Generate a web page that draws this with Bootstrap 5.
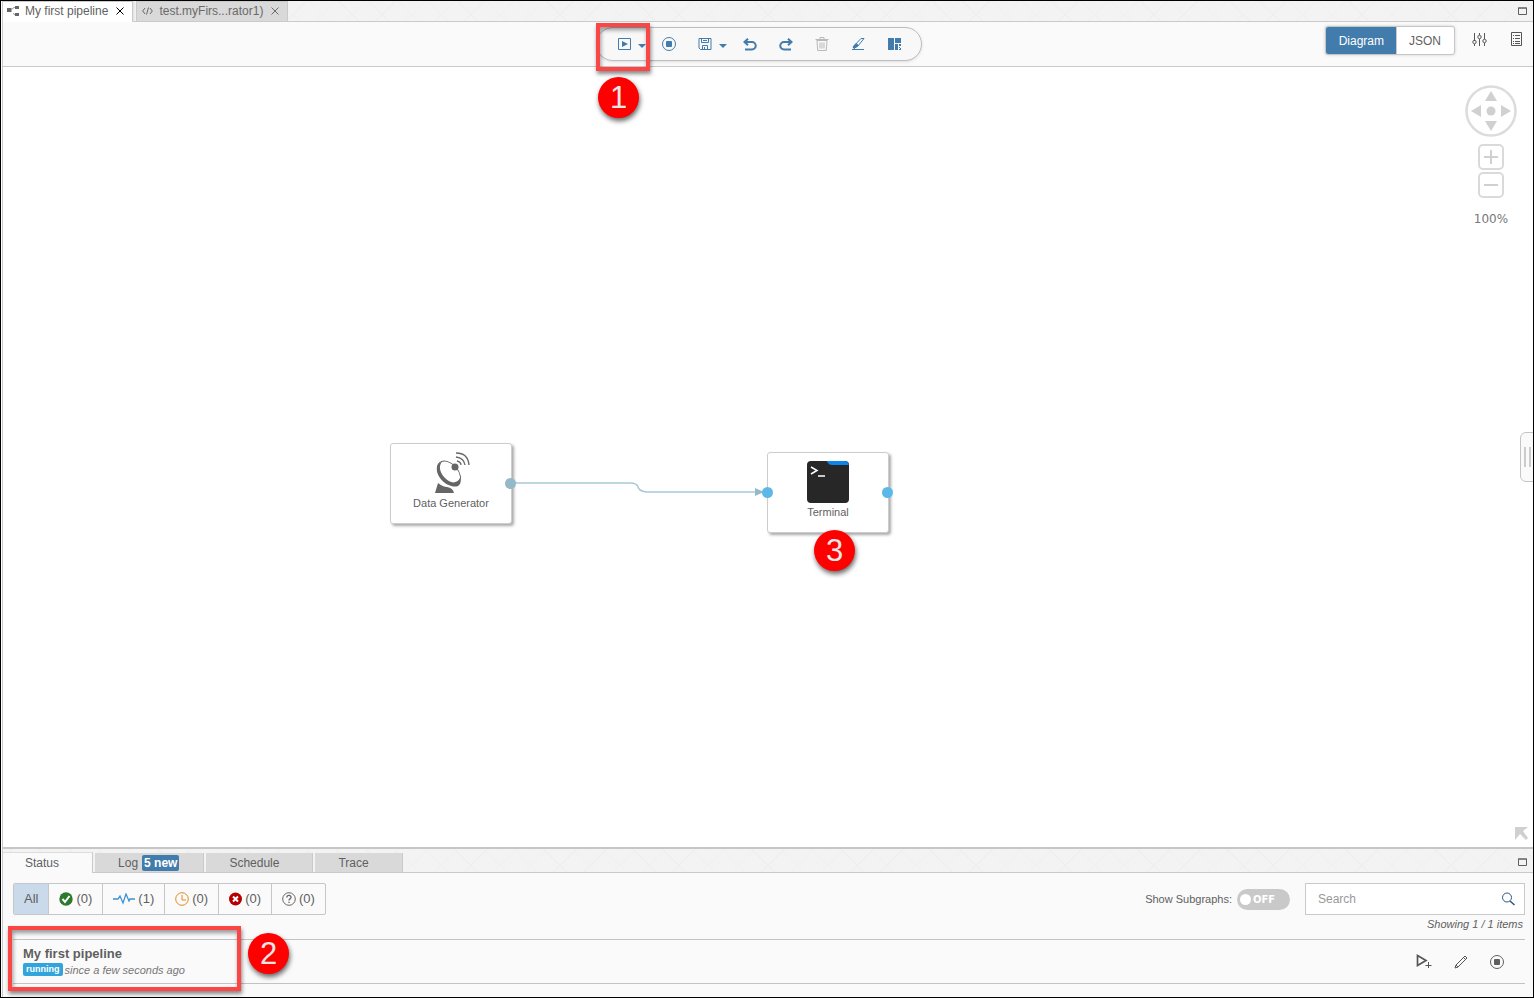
<!DOCTYPE html>
<html lang="en">
<head>
<meta charset="utf-8">
<meta name="viewport" content="width=device-width, initial-scale=1">
<title>My first pipeline</title>
<link href="https://cdn.jsdelivr.net/npm/bootstrap@5.3.0/dist/css/bootstrap.min.css" rel="stylesheet">
<style>
  :root { --line: #cacaca; --ink: #5f5f5f; --blue: #427cac; }
  body { font: 12px/16px "Liberation Sans", Arial, sans-serif; color: var(--ink); background: #fff; border: 1px solid #000; padding-left: 1px; }
  svg { display: block; }
  a { color: inherit; text-decoration: none; }
  button { border: 0; background: none; padding: 0; color: inherit; }
  .workspace { border-left: 1px solid var(--line); }
  .tabstrip { padding-right: 6px; border-bottom: 1px solid var(--line); background-color: #f3f3f3;
    background-image: repeating-linear-gradient(45deg, transparent 0 20px, #efefef 20px 21px), repeating-linear-gradient(-45deg, transparent 0 20px, #efefef 20px 21px); }
  .doc-tab { height: 20px; padding: 0 8px 2px 5px; margin-left: 3px; border: 1px solid var(--line); border-bottom: 0; background: #d9d9d9; color: #6a6a6a; }
  .doc-tab.current { background: #fff; border-left: 0; color: var(--ink); height: 21px; padding: 0 8px 2px 4px; margin: 0 0 -1px; box-shadow: 1px 0 2px #ddd; }
  .doc-tab a { margin: 0 8px 0 6px; }
  .editor-bar { display: grid; grid-template-columns: 1fr auto 1fr; height: 45px; padding-right: 10px; background: #fafafa; border-bottom: 1px solid var(--line); }
  .tool-pill { grid-column: 2; height: 34px; padding: 0 9px; border: 1px solid #bdbdbd; border-radius: 17px; background: #f8f8f8; color: var(--blue); box-shadow: 0 1px 3px #ddd; }
  .tool { width: 36px; height: 32px; display: flex; align-items: center; justify-content: center; }
  .tool.split { width: 29px; padding-left: 11px; justify-content: flex-start; }
  .drop { width: 14px; height: 32px; margin-right: 2px; display: flex; align-items: center; justify-content: center; padding-top: 3px; }
  .view-switch { height: 29px; margin-right: 17px; border: 1px solid #c6c6c6; border-radius: 3px; overflow: hidden; background: #fff; box-shadow: 0 0 3px #ccc; }
  .view-switch button { height: 27px; padding: 0 13px 0 12px; }
  .view-switch .on { background: var(--blue); color: #fff; padding: 0 12px 0 13px; border-right: 1px solid var(--line); }
  .side-tool { margin-top: 10px; }
  .canvas { min-height: 600px; overflow: hidden; }
  .wires { left: 0; top: 0; }
  .node { width: 122px; height: 81px; background: #fff; border: 1px solid #cdcdcd; border-radius: 3px; box-shadow: 2px 2px 3px #aaa; font-size: 11px; line-height: 18px; }
  .port { width: 11px; height: 11px; border-radius: 50%; background: #5cb8e6; top: 34px; }
  .port.in { left: -6px; } .port.out { right: -5px; } .port.used { background: #94b9c8; }
  .navigator { right: 16px; top: 18px; }
  .zoom-set { margin-top: 7px; gap: 2px; }
  .zoom-label { margin-top: 13px; font: 12px/16px "DejaVu Sans", Verdana, sans-serif; color: #777; }
  .drawer { right: -1px; top: 50%; transform: translateY(-50%); width: 14px; height: 50px; gap: 3px; padding-left: 3px; border: 1px solid #c4c4c4; border-radius: 6px 0 0 6px; background: #fafafa; }
  .drawer i { width: 2px; height: 20px; background: #ccc; }
  .expand { right: 5px; bottom: 7px; }
  .lower { border-top: 2px solid #c6c6c6; }
  .info-tabs { gap: 2px; padding-top: 3px; }
  .info-tab { height: 19px; padding: 0 24px 0 23px; border-right: 1px solid var(--line); background: #d9d9d9; }
  .info-tab.wide { padding-right: 33px; }
  .info-tab.current { height: 21px; margin-bottom: -1px; background: #fafafa; padding: 0 33px 0 22px; border-top: 1px solid #ddd; }
  .fresh { background: var(--blue); color: #fff; font-weight: bold; padding: 0 2px; border-radius: 2px; }
  .status-pane { background: #fafafa; padding: 10px 8px 13px 10px; }
  .filters { height: 32px; border: 1px solid #c6c6c6; border-radius: 2px; overflow: hidden; font-size: 13px; }
  .filters button { height: 30px; padding: 0 10px; display: flex; align-items: center; gap: 3px; border-left: 1px solid #c6c6c6; }
  .filters button:first-child { border-left: 0; background: #cadaea; }
  .small-type { font-size: 11px; line-height: 14px; }
  .tally { padding: 2px 2px 8px; }
  .switch { width: 53px; height: 21px; margin: 0 15px 0 5px; border-radius: 11px; background: #c9c9c9; color: #fff; font: bold 10px/21px "DejaVu Sans", Verdana, sans-serif; padding-left: 16px; cursor: pointer; }
  .switch input { appearance: none; position: absolute; left: 3px; top: 5px; width: 11px; height: 11px; margin: 0; border-radius: 50%; background: #fff; }
  .search-box { width: 220px; height: 32px; border: 1px solid var(--line); background: #fff; }
  .search-box input { border: 0; outline: 0; width: 100%; padding: 0 0 0 12px; font-size: 12px; background: none; }
  .search-box input::placeholder { color: #999; opacity: 1; }
  .run-row { height: 45px; border: 1px solid #c2c2c2; border-width: 1px 0; padding: 0 0 2px 10px; }
  .run-name { font-size: 13px; font-weight: bold; line-height: 18px; }
  .run-actions { gap: 22px; margin-right: 21px; padding-top: 2px; }
  .since { color: #777; }
  .state { background: #31a5db; color: #fff; font: bold 9px/13px "Liberation Sans", Arial, sans-serif; padding: 0 3px; margin-right: 2px; border-radius: 2px; }
  .frame { border: 4px solid #fc4545; box-shadow: 1px 3px 4px #0007, inset 1px 3px 4px #0006; pointer-events: none; }
  .frame.run { left: -1px; top: -5px; width: 54px; height: 48px; }
  .frame.job { left: -5px; top: -14px; width: 233px; height: 65px; }
  .step { width: 41px; height: 41px; border-radius: 50%; background: #fe0000; color: #e6e6e6; font-size: 31px; line-height: 41px; text-align: center; box-shadow: 1px 3px 5px #0009; }
</style>
</head>
<body class="d-flex flex-column min-vh-100">
<svg class="d-none">
  <symbol id="caret" viewBox="0 0 8 4"><path d="M0 0h8L4 4z" fill="currentColor"/></symbol>
  <symbol id="cross" viewBox="0 0 8 8"><path d="M.5.5l7 7M7.5.5l-7 7" stroke="currentColor" fill="none"/></symbol>
  <symbol id="window" viewBox="0 0 9 8"><path d="M.5 1h8v6.5h-8zM0 1h9" stroke="currentColor" fill="none"/></symbol>
  <symbol id="stop" viewBox="0 0 14 14"><circle cx="7" cy="7" r="6.5" fill="none" stroke="currentColor"/><rect x="4" y="4" width="6" height="6" rx="1" fill="currentColor"/></symbol>
</svg>
<div class="workspace d-flex flex-column flex-grow-1" id="app">
  <nav class="tabstrip d-flex align-items-end" aria-label="Open documents">
    <div class="doc-tab current d-flex align-items-center">
      <svg width="12" height="12" viewBox="0 0 12 12" fill="#666"><path d="M0 3h4.500v4H0zM8 1h4v3H8zM8 8h4v3H8z"/><path d="M4.500 4.500L7 2.500h1M6.500 8l.5 1.500h1" fill="none" stroke="#999"/></svg>
      <a href="#">My first pipeline</a>
      <button aria-label="Close" class="text-black"><svg width="8" height="8"><use href="#cross"/></svg></button>
    </div>
    <div class="doc-tab d-flex align-items-center">
      <svg width="11" height="8" viewBox="0 0 11 8" fill="none" stroke="#666"><path d="M3 1L.7 4 3 7M8 1l2.300 3L8 7M6.500.5l-2 7"/></svg>
      <a href="#">test.myFirs...rator1)</a>
      <button aria-label="Close"><svg width="8" height="8"><use href="#cross"/></svg></button>
    </div>
    <button class="ms-auto align-self-center" aria-label="Maximize"><svg width="9" height="8"><use href="#window"/></svg></button>
  </nav>

  <header class="editor-bar">
    <div class="tool-pill d-flex position-relative align-self-center me-2">
      <button class="tool split" aria-label="Run"><svg width="14" height="14" viewBox="0 0 14 14"><path d="M1.500 1.500h12v11h-12z" fill="none" stroke="currentColor"/><path d="M5 4v6l6-3z" fill="currentColor"/></svg></button>
      <button class="drop" aria-label="Run options"><svg width="8" height="4"><use href="#caret"/></svg></button>
      <button class="tool" aria-label="Stop"><svg width="14" height="14"><use href="#stop"/></svg></button>
      <button class="tool split" aria-label="Save"><svg width="14" height="14" viewBox="0 0 14 14" fill="none" stroke="currentColor"><path d="M1 1.500h12v11H2.500L1 11zM3.500 1.500v4h7v-4M4.500 12.500v-4h5v4M6.500 10v2.500M5 3.500h4"/></svg></button>
      <button class="drop" aria-label="Save options"><svg width="8" height="4"><use href="#caret"/></svg></button>
      <button class="tool" aria-label="Undo"><svg width="14" height="13" viewBox="0 0 14 13" fill="none" stroke="currentColor" stroke-width="2"><path d="M5 .7L1.500 4 5 7.300M1.500 4H9a3.700 3.700 0 0 1 0 7.500H2"/></svg></button>
      <button class="tool" aria-label="Redo"><svg width="14" height="13" viewBox="0 0 14 13" fill="none" stroke="currentColor" stroke-width="2"><path d="M9 .7L12.500 4 9 7.300M12.500 4H5a3.700 3.700 0 0 0 0 7.500h7"/></svg></button>
      <button class="tool" aria-label="Delete" disabled><svg width="14" height="14" viewBox="0 0 14 14" fill="none" stroke="#b9b9b9"><path d="M.5 2.500h13M5 2V.5h4V2M2 4l.7 9.500h8.600L12 4M5 5.500v6M7 5.500v6M9 5.500v6M1.500 3.500h11"/></svg></button>
      <button class="tool" aria-label="Clear"><svg width="14" height="14" viewBox="0 0 14 14" fill="none" stroke="currentColor"><path d="M10 1.500h3L7 9l-4 2-1-1z"/><path d="M2 10l3-3.500L7.500 8.500 3 11.500z" fill="currentColor"/><path d="M1 12.500h12"/></svg></button>
      <button class="tool" aria-label="Arrange"><svg width="13" height="12" viewBox="0 0 13 12" fill="currentColor"><path d="M0 0h6v12H0zM7 0h6v5H7zM7 6h3v6H7zM11 6h2v2h-2zM11 9h1v1h-1zM12 10h1v2h-2v-1h1z"/></svg></button>
      <span class="frame run position-absolute"></span>
    </div>
    <div class="d-flex justify-content-end align-items-start">
      <div class="view-switch d-flex mt-1"><button class="on">Diagram</button><button>JSON</button></div>
      <button class="side-tool me-4" aria-label="Settings"><svg width="15" height="16" viewBox="0 0 15 16" fill="none" stroke="#555"><path d="M2.500 1v8M2.500 12v2M7.500 1v2M7.500 7v7M12.500 1v6M12.500 11v3"/><circle cx="2.500" cy="10" r="1.700"/><circle cx="7.500" cy="5" r="1.700"/><circle cx="12.500" cy="9" r="1.700"/></svg></button>
      <button class="side-tool" aria-label="Properties"><svg width="12" height="15" viewBox="0 0 12 15" fill="none" stroke="#555"><path d="M.5.5h10v13H.5zM2 3.500h1M4 3.500h5M2 6.500h1M4 6.500h5M2 9.500h1M4 9.500h5M2 11.500h1M4 11.500h5"/></svg></button>
    </div>
  </header>

  <main class="canvas position-relative flex-grow-1">
    <svg class="wires position-absolute" width="900" height="600" fill="none"><path d="M508 416H627q7 0 8 4t8 5H754" stroke="#a9c9d6" stroke-width="1.500"/><path d="M752 421l9 4-9 4z" fill="#94b9c8"/></svg>
    <div class="node position-absolute d-flex flex-column align-items-center" style="left:387px;top:376px">
      <svg class="mt-2" width="37" height="42" viewBox="0 0 37 42">
        <path d="M5 31q5 4 9 4 6 1 7 6H2z" fill="#666"/>
        <path d="M9 10C3 11 2 19 7 26s14 10 18 8c3-2 3-5 2-8-3 6-10 6-16-1-5-6-5-12-2-15z" fill="#666"/>
        <ellipse cx="16" cy="21" rx="14" ry="9" transform="rotate(48 16 21)" fill="none" stroke="#666"/>
        <circle cx="22" cy="15" r="3.500" fill="#666"/>
        <path d="M25 9q4 1 4 4M24 5q8 1 9 8M24 1q12 0 13 12" transform="translate(-1)" fill="none" stroke="#666" stroke-width="1.300"/>
      </svg>
      <span>Data Generator</span>
      <i class="port used out position-absolute"></i>
    </div>
    <div class="node position-absolute d-flex flex-column align-items-center" style="left:764px;top:385px">
      <svg class="mt-2" width="42" height="42" viewBox="0 0 42 42"><rect width="42" height="42" rx="4" fill="#272727"/><path d="M19 0h19q3 0 4 4H25q-3 0-4-2t-2-2" fill="#0b86ea"/><path d="M4 6l6 3.500L4 13M11 15h7" fill="none" stroke="#fff" stroke-width="1.500"/></svg>
      <span>Terminal</span>
      <i class="port in position-absolute"></i><i class="port out position-absolute"></i>
    </div>
    <span class="step position-absolute" style="left:595px;top:10px">1</span>
    <span class="step position-absolute" style="left:811px;top:463px">3</span>

    <div class="navigator position-absolute d-flex flex-column align-items-center">
      <button aria-label="Pan"><svg width="52" height="52" viewBox="0 0 52 52" fill="#d0d0d0"><circle cx="26" cy="26" r="24.500" fill="none" stroke="#dcdcdc" stroke-width="2.500"/><circle cx="26" cy="26" r="4.500"/><path d="M26 6l6 10H20zM26 46l6-10H20zM6 26l10-6v12zM46 26l-10-6v12z"/></svg></button>
      <div class="zoom-set d-flex flex-column">
        <button aria-label="Zoom in"><svg width="26" height="26" fill="none" stroke="#dadada" stroke-width="2"><rect x="1" y="1" width="24" height="24" rx="4"/><path d="M6 13h14M13 6v14" stroke="#d0d0d0"/></svg></button>
        <button aria-label="Zoom out"><svg width="26" height="26" fill="none" stroke="#dadada" stroke-width="2"><rect x="1" y="1" width="24" height="24" rx="4"/><path d="M6 13h14" stroke="#d0d0d0"/></svg></button>
      </div>
      <span class="zoom-label">100%</span>
    </div>
    <button class="drawer position-absolute d-flex align-items-center" aria-label="Open panel"><i></i><i></i></button>
    <svg class="expand position-absolute" width="13" height="13" viewBox="0 0 13 13"><path d="M0 0h13L8 4l5 7-2 2-6-6-5 6z" fill="#d0d0d0"/></svg>
  </main>

  <section class="lower">
    <nav class="tabstrip info-tabs d-flex align-items-end" aria-label="Details">
      <a href="#" class="info-tab current d-flex align-items-center">Status</a>
      <a href="#" class="info-tab d-flex align-items-center gap-1">Log <span class="fresh">5 new</span></a>
      <a href="#" class="info-tab wide d-flex align-items-center">Schedule</a>
      <a href="#" class="info-tab wide d-flex align-items-center">Trace</a>
      <button class="ms-auto align-self-center" aria-label="Maximize"><svg width="9" height="8"><use href="#window"/></svg></button>
    </nav>
    <div class="status-pane">
      <div class="d-flex align-items-center">
        <div class="filters d-flex me-auto">
          <button>All</button>
          <button><svg width="14" height="14"><circle cx="7" cy="7" r="6.700" fill="#2c7a2c"/><path d="M3.500 7l2.500 3 4.500-6" fill="none" stroke="#fff" stroke-width="2"/></svg>(0)</button>
          <button><svg width="22" height="12" fill="none" stroke="#3d91d0" stroke-width="1.300"><path d="M0 6h5l2-3 3 7 3-9 3 7 1-2h5"/></svg>(1)</button>
          <button><svg width="14" height="14" fill="none" stroke="#e08a20"><circle cx="7" cy="7" r="6.300"/><path d="M7 3v5h4"/></svg>(0)</button>
          <button><svg width="13" height="14"><circle cx="6.500" cy="7" r="6.500" fill="#b60000"/><path d="M4 4.500l5 5M9 4.500l-5 5" stroke="#fff" stroke-width="2"/></svg>(0)</button>
          <button><svg width="14" height="14" fill="none" stroke="#666"><circle cx="7" cy="7" r="6.300"/><path d="M4.800 5.500C5 2.500 9.300 3 9 5.500 8.800 7 7 6.800 7 8.500M7 9.700v1.300" stroke-width="1.300"/></svg>(0)</button>
        </div>
        <label for="subgraphs" class="small-type">Show Subgraphs:</label>
        <label class="switch position-relative"><input type="checkbox" id="subgraphs" aria-label="Show Subgraphs">OFF</label>
        <div class="search-box d-flex align-items-center pe-2">
          <input type="text" placeholder="Search" aria-label="Search">
          <button aria-label="Search"><svg width="15" height="14" viewBox="0 0 15 14" fill="none" stroke="#2f567c"><circle cx="6" cy="5.500" r="4.500"/><path d="M9 9l4.500 4" stroke-width="1.500"/></svg></button>
        </div>
      </div>
      <div class="small-type tally fst-italic text-end">Showing 1 / 1 items</div>
      <article class="run-row position-relative d-flex align-items-center">
        <div>
          <div class="run-name">My first pipeline</div>
          <div class="small-type d-flex align-items-center"><span class="state">running</span><em class="since">since a few seconds ago</em></div>
        </div>
        <div class="run-actions d-flex ms-auto">
          <button aria-label="Run again"><svg width="16" height="15" viewBox="0 0 16 15" fill="none" stroke="#555"><path d="M1.500 1.500v10L10 6.500z" stroke-width="1.700"/><path d="M12.500 8v6M9.500 11.500h6"/></svg></button>
          <button aria-label="Edit"><svg width="14" height="14" viewBox="0 0 14 14" fill="none" stroke="#555"><path d="M11 1l2 2-9 9-3 1 1-3zM9.500 2.500l2 2M2 10l2 2"/></svg></button>
          <button aria-label="Stop"><svg width="14" height="14"><use href="#stop"/></svg></button>
        </div>
        <span class="frame job position-absolute"></span>
        <span class="step position-absolute" style="left:235px;top:-7px">2</span>
      </article>
    </div>
  </section>
</div>
<script src="https://cdn.jsdelivr.net/npm/bootstrap@5.3.0/dist/js/bootstrap.bundle.min.js"></script>
</body>
</html>
